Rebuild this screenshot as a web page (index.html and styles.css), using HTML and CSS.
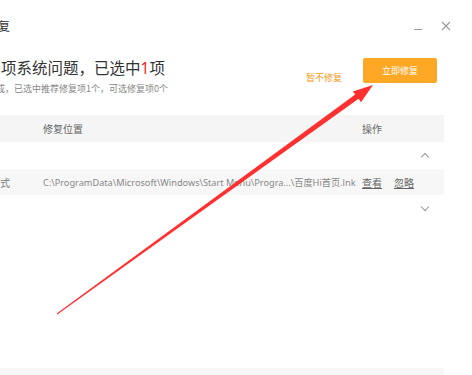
FILE: index.html
```html
<!DOCTYPE html>
<html lang="zh">
<head>
<meta charset="utf-8">
<link rel="stylesheet" href="styles.css">
</head>
<body>
<div class="win">
  <div class="titlebar">
    <span class="title">复</span>
    <div class="winbtns">
      <span class="min"></span>
      <svg class="close" width="10" height="10" viewBox="0 0 10 10"><path d="M1 1L9 9M9 1L1 9" stroke="#9a9a9a" stroke-width="1.1" fill="none"/></svg>
    </div>
  </div>
  <div class="summary">
    <div class="sum-text">
      <div class="headline">项系统问题，已选中<span class="red">1</span>项</div>
      <div class="sub"><span class="cut">成</span>，已选中推荐修复项1个，可选修复项0个</div>
    </div>
    <div class="actions">
      <span class="skip">暂不修复</span>
      <span class="fix">立即修复</span>
    </div>
  </div>
  <div class="table">
    <div class="row head">
      <span class="c1"></span>
      <span class="c2">修复位置</span>
      <span class="c3">操作</span>
    </div>
    <div class="row group">
      <span class="chev up"></span>
    </div>
    <div class="row item">
      <span class="c1">式</span>
      <span class="c2 path">C:\ProgramData\Microsoft\Windows\Start Menu\Progra...\百度Hi首页.lnk</span>
      <span class="c3 ops"><a>查看</a><a>忽略</a></span>
    </div>
    <div class="row group">
      <span class="chev down"></span>
    </div>
  </div>
  <div class="spacer"></div>
  <div class="footer"></div>
</div>
<svg class="arrow" width="472" height="375" viewBox="0 0 472 375">
  <polygon fill="#ff3030" points="56.7,313.6 355.2,94.6 352.8,91.6 373,85 361,102.2 358.6,98.8 57.3,314.4"/>
</svg>
</body>
</html>
```

FILE: styles.css
```css
html, body {
  margin: 0;
  padding: 0;
  background: #fff;
  overflow: hidden;
}
body {
  width: 472px;
  height: 375px;
  position: relative;
  font-family: "Noto Sans", "Noto Sans CJK SC", sans-serif;
  color: #333;
}
.win {
  width: 444px;
  height: 375px;
  display: flex;
  flex-direction: column;
  background: #fff;
}
.titlebar {
  height: 50px;
  display: flex;
  align-items: flex-start;
  justify-content: space-between;
  padding-top: 18px;
  box-sizing: border-box;
}
.title {
  font-family: "Noto Sans CJK SC", sans-serif;
  font-size: 12px;
  line-height: 16px;
  color: #333;
  margin-left: -2px;
}
.winbtns {
  display: flex;
  align-items: flex-start;
  gap: 19px;
  margin-right: -7px;
  padding-top: 3px;
}
.min {
  width: 8px;
  height: 0;
  border-top: 1px solid #9a9a9a;
  margin-top: 8px;
}
.close { display: block; }
.summary {
  display: flex;
  justify-content: space-between;
  align-items: flex-start;
  height: 65px;
}
.sum-text {
  padding-top: 6px;
}
.headline {
  font-family: "Noto Sans CJK SC", sans-serif;
  font-size: 15.5px;
  line-height: 22px;
  color: #333;
  margin-left: 1px;
}
.red { color: #f22; font-family: "Noto Sans", sans-serif; }
.sub {
  font-family: "Noto Sans CJK SC", sans-serif;
  font-size: 9px;
  line-height: 12px;
  margin-top: 4px;
  color: #888;
  white-space: nowrap;
}
.cut { margin-left: -4px; }
.actions {
  display: flex;
  align-items: flex-start;
  gap: 21px;
  margin-right: 7px;
  padding-top: 8px;
}
.skip {
  font-family: "Noto Sans CJK SC", sans-serif;
  font-size: 9px;
  line-height: 12px;
  color: #f39a1c;
  margin-top: 14px;
}
.fix {
  width: 74px;
  height: 25px;
  background: #ffa826;
  border-radius: 2px;
  color: #fff;
  font-family: "Noto Sans CJK SC", sans-serif;
  font-size: 9px;
  display: flex;
  align-items: center;
  justify-content: center;
}
.table {
  display: flex;
  flex-direction: column;
}
.row {
  display: flex;
  align-items: center;
  height: 27px;
  font-family: "Noto Sans CJK SC", sans-serif;
  font-size: 10px;
}
.row.head {
  background: #f5f5f5;
  color: #666;
}
.row.item {
  background: #f7f7f7;
  color: #777;
  height: 26px;
}
.c1 { width: 43px; flex: none; }
.c2 { width: 319px; flex: none; white-space: nowrap; overflow: hidden; }
.c3 { flex: none; }
.path {
  font-family: "Noto Sans", "Noto Sans CJK SC", sans-serif;
  font-size: 9.2px;
  color: #888;
}
.ops { display: flex; gap: 12px; }
.ops a {
  color: #666;
  text-decoration: underline;
}
.row.group {
  justify-content: flex-end;
  padding-right: 16px;
}
.chev {
  width: 5px;
  height: 5px;
  border-left: 1px solid #999;
  border-top: 1px solid #999;
}
.chev.up { transform: rotate(45deg); margin-top: 3px; }
.chev.down { transform: rotate(225deg); margin-top: -3px; }
.spacer { flex: 1; }
.footer {
  height: 7px;
  background: #f7f7f7;
}
.arrow {
  position: absolute;
  left: 0;
  top: 0;
  pointer-events: none;
}
```
